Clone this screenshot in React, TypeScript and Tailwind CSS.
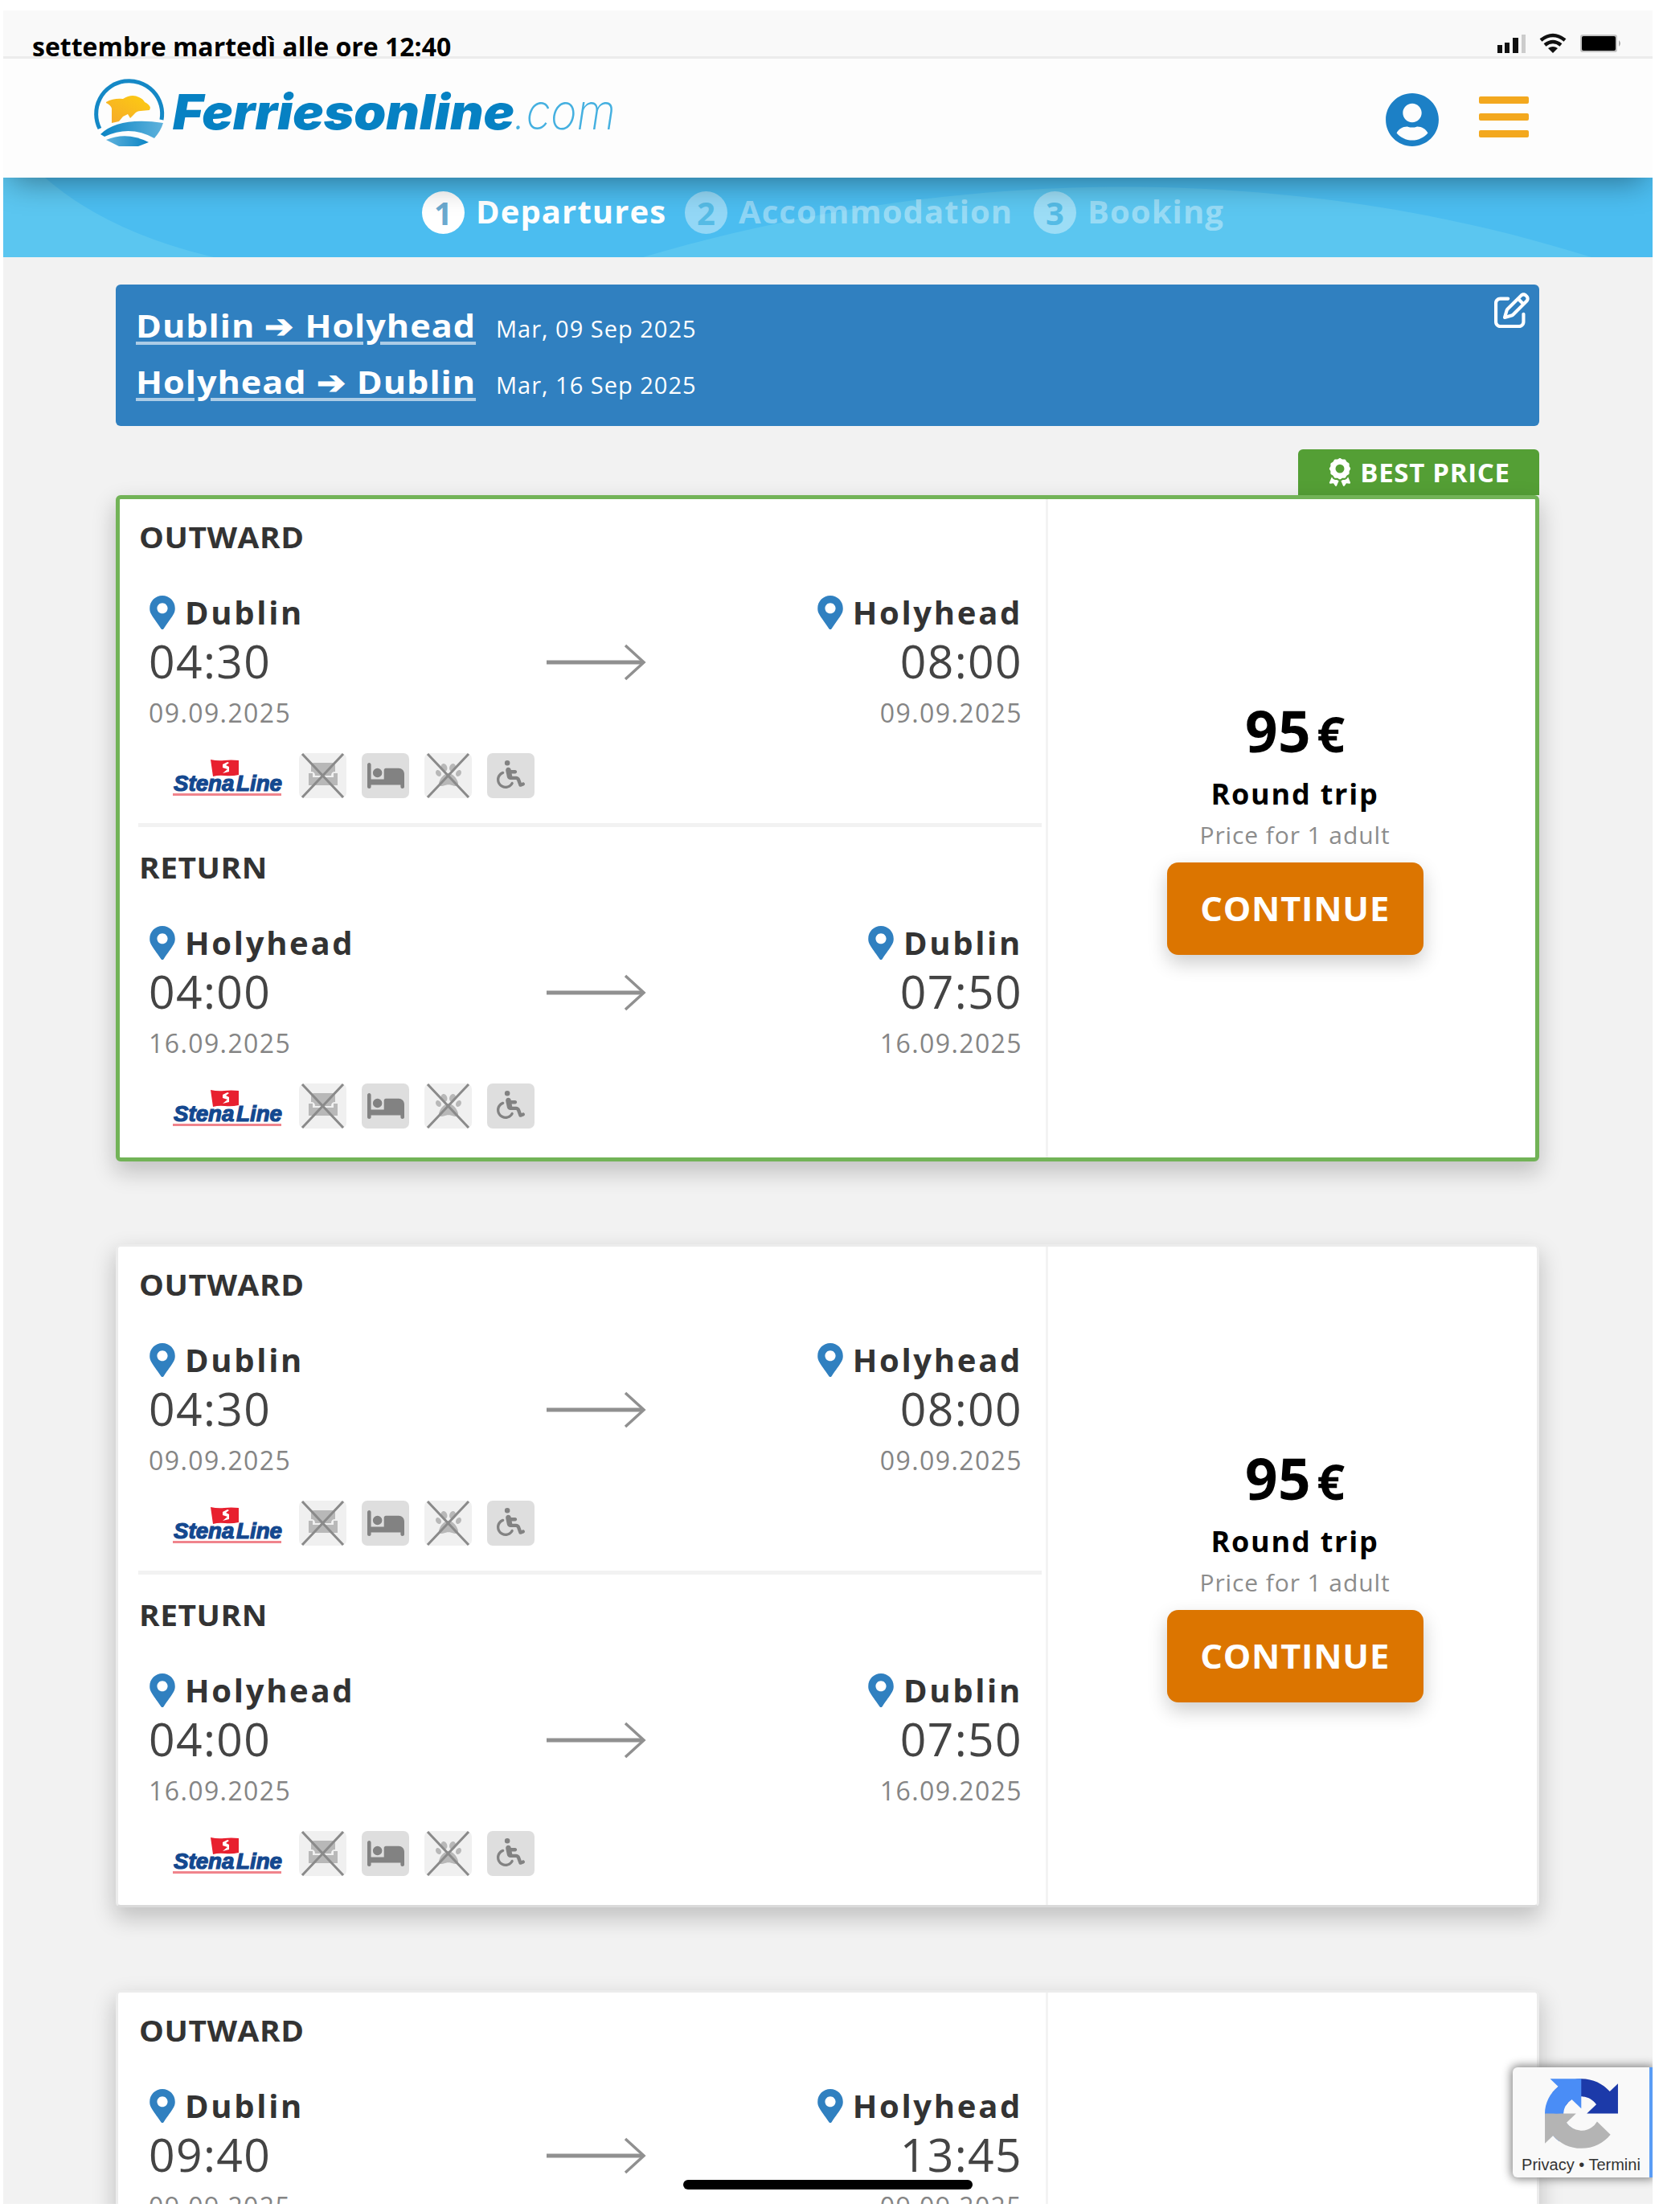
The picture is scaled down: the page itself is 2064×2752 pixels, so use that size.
import React from 'react';
import { FaAward, FaBed, FaPaw, FaRegPenToSquare, FaWheelchair } from 'react-icons/fa6';
import { FaMapMarkerAlt, FaUserCircle } from 'react-icons/fa';

interface Leg {
  title: string;
  from: string;
  to: string;
  departure: string;
  arrival: string;
  date: string;
}

interface Trip {
  id: number;
  best: boolean;
  price: number;
  legs: Leg[];
}

const outward: Leg = {
  title: 'OUTWARD',
  from: 'Dublin',
  to: 'Holyhead',
  departure: '04:30',
  arrival: '08:00',
  date: '09.09.2025'
};

const back: Leg = {
  title: 'RETURN',
  from: 'Holyhead',
  to: 'Dublin',
  departure: '04:00',
  arrival: '07:50',
  date: '16.09.2025'
};

const trips: Trip[] = [
  { id: 1, best: true, price: 95, legs: [outward, back] },
  { id: 2, best: false, price: 95, legs: [outward, back] },
  { id: 3, best: false, price: 95, legs: [{ ...outward, departure: '09:40', arrival: '13:45' }, back] }
];

const StatusBar = () => (
  <div className="relative z-20 flex h-[57px] items-end justify-between bg-[#f9f9f9] pl-[36px] pr-[36px]">
    <span className="-mb-[5px] whitespace-nowrap text-[32px] font-bold leading-[34px] text-black">
      settembre martedì alle ore 12:40
    </span>
    <svg className="mb-[2px] h-[28px] w-[158px]" viewBox="0 0 158 28">
      <path d="M1 16h6v10H1zM10 13h6v13h-6zM20 7h7v19h-7z" fill="#111" />
      <path d="M31 3h5v23h-5z" fill="#ccc" />
      <g fill="none" stroke="#111" strokeWidth="4.5">
        <path d="M55 10q15-12 30 0" />
        <path d="M60 16q10-8 20 0" />
      </g>
      <path d="M64 20q6-4 12 0l-6 6z" fill="#111" />
      <rect x="104" y="3" width="46" height="22" rx="3" fill="#c4c4c4" />
      <rect x="106" y="5" width="42" height="18" rx="2" fill="#000" />
      <path d="M152 10q4 4 0 8z" fill="#aaa" />
    </svg>
  </div>
);

const Logo = () => (
  <svg className="h-[90px] w-[660px]" viewBox="0 0 660 90">
    <defs>
      <linearGradient id="sea" x1="0" x2="1">
        <stop offset="0" stopColor="#0a84c4" />
        <stop offset="1" stopColor="#5fb2dc" />
      </linearGradient>
      <linearGradient id="foam" x1="1" x2="0">
        <stop offset="0" stopColor="#0a84c4" />
        <stop offset="1" stopColor="#5fb2dc" />
      </linearGradient>
      <linearGradient id="sun" x1="0" x2="1" y1="1" y2="0">
        <stop offset="0" stopColor="#f5a92b" />
        <stop offset="1" stopColor="#fdcd10" />
      </linearGradient>
    </defs>
    <path d="M8 63A41 41 0 1 1 85 52" fill="none" stroke="#1488c6" strokeWidth="5" />
    <path d="M16 30Q25 25 37 26Q48 19 57 24Q62 26 64 30Q70 33 71 37L70 40L59 41Q54 41 51 45L46 50L43 45L37 48L32 54L23 56V38Q22 34 16 31z" fill="url(#sun)" />
    <path d="M9 70Q32 48 87 56Q84 66 76 75Q46 58 14 73z" fill="url(#sea)" />
    <path d="M16 77Q42 66 69 80L56 85H32z" fill="url(#foam)" />
    <text x="99" y="64" fontFamily="Inter" fontSize="60" fontWeight="900" fontStyle="italic" fill="#0681c3" textLength="425" lengthAdjust="spacingAndGlyphs">Ferriesonline</text>
    <text x="523" y="64" fontFamily="Inter" fontSize="62" fontWeight="200" fontStyle="italic" fill="#45b0e0" textLength="127" lengthAdjust="spacingAndGlyphs">.com</text>
  </svg>
);

const Header = () => (
  <header className="relative z-10 flex h-[151px] items-start justify-between border-t-[3px] border-[#ececec] bg-[#fdfdfd] pl-[112px] pr-[154px] shadow-[0_14px_36px_-10px_rgba(0,0,0,0.42)]">
    <div className="mt-[24px]">
      <Logo />
    </div>
    <div className="mt-[42px] flex items-start gap-[49px]">
      <FaUserCircle className="h-[68px] w-[68px] text-[#1c80c6]" />
      <div className="mt-[5px] flex flex-col gap-[12px]">
        <span className="h-[9px] w-[62px] rounded-[2px] bg-[#f3a81e]" />
        <span className="h-[9px] w-[62px] rounded-[2px] bg-[#f3a81e]" />
        <span className="h-[9px] w-[62px] rounded-[2px] bg-[#f3a81e]" />
      </div>
    </div>
  </header>
);

const steps = [
  { n: 1, label: 'Departures', width: 'w-[274px]' },
  { n: 2, label: 'Accommodation', width: 'w-[381px]' },
  { n: 3, label: 'Booking', width: 'w-[210px]' }
];

const Steps = () => (
  <div className="relative h-[99px] overflow-hidden bg-[#4bbdf0]">
    <svg className="absolute inset-0 h-full w-full" viewBox="0 0 2052 99" preserveAspectRatio="none">
      <path d="M0 0H52Q130 68 262 99H0zM796 99C1180 -15 1600 -20 1976 99z" fill="#5bc6f0" />
    </svg>
    <div className="relative flex items-center pl-[521px] pt-[17px]">
      {steps.map(s => (
        <div key={s.n} className={`flex items-center ${s.n === 1 ? 'text-white' : 'text-white/40'}`}>
          <span className={`flex h-[53px] w-[53px] items-center justify-center rounded-full text-[40px] font-bold leading-none ${s.n === 1 ? 'bg-white text-[#6ba9cf]' : 'bg-white/40 text-[#55bbe5]'}`}>
            {s.n}
          </span>
          <span className={`-mt-[4px] pl-[14px] text-[40px] font-bold leading-[53px] tracking-[1.1px] ${s.width}`}>{s.label}</span>
        </div>
      ))}
    </div>
  </div>
);

const SearchSummary = () => (
  <div className="relative h-[176px] w-[1771px] rounded-[6px] bg-[#3080c0] pl-[25px] pt-[18px] text-white">
    {[
      ['Dublin ➔ Holyhead', 'Mar, 09 Sep 2025'],
      ['Holyhead ➔ Dublin', 'Mar, 16 Sep 2025']
    ].map(([route, date]) => (
      <div key={date} className="flex h-[70px] items-baseline leading-[66px]">
        <span className="w-[423px] origin-left scale-x-[1.08] whitespace-nowrap text-[40px] font-bold tracking-[0.9px] underline decoration-white/60 decoration-[4px] underline-offset-[5px]">{route}</span>
        <span className="ml-[25px] whitespace-nowrap text-[29px] font-medium tracking-[1px]">{date}</span>
      </div>
    ))}
    <FaRegPenToSquare className="absolute right-[12px] top-[10px] h-[44px] w-[44px]" />
  </div>
);

const StenaLine = () => (
  <svg className="h-[56px] w-[138px]" viewBox="0 0 138 56">
    <path d="M47 8q9 2 17 1t18 0v18q-9 2-17 1t-15 1z" fill="#e8202f" />
    <path d="M68 11l-6 3v4l6 2-6 5 8-2v-6l-4-2 4-3z" fill="#fff" />
    <text x="1" y="47" fontFamily="Liberation Sans" fontSize="27" fontWeight="700" fontStyle="italic" fill="#14488f" stroke="#14488f" strokeWidth="1.2" wordSpacing="-5" textLength="135" lengthAdjust="spacingAndGlyphs">Stena Line</text>
    <path d="M0 50h135v3H0z" fill="#f0848c" />
  </svg>
);

const Lounge = ({ className }: { className: string }) => (
  <svg className={className} viewBox="0 0 38 30" fill="currentColor">
    <path d="M4 12V5q0-4 4-4h22q4 0 4 4v7q-5 0-5 5H9q0-5-5-5z" />
    <path d="M1 14h5v5h26v-5h5v15H1z" />
  </svg>
);

const features = [
  { key: 'lounge', icon: Lounge, available: false, size: 'h-[30px] w-[38px] -mt-[4px]' },
  { key: 'cabin', icon: FaBed, available: true, size: 'h-[46px] w-[46px]' },
  { key: 'pets', icon: FaPaw, available: false, size: 'h-[32px] w-[34px] -mt-[3px]' },
  { key: 'wheelchair', icon: FaWheelchair, available: true, size: 'h-[35px] w-[37px] -mt-[3px]' }
];

const Features = () => (
  <div className="flex gap-[19px]">
    {features.map(({ key, icon: Icon, available, size }) => (
      <div key={key} className={`relative flex h-[56px] w-[59px] items-center justify-center rounded-[7px] ${available ? 'bg-[#dedede] text-[#828282]' : 'bg-[#f0f0f0] text-[#b8b8b8]'}`}>
        <Icon className={size} />
        {!available && (
          <svg className="absolute inset-0 h-full w-full" viewBox="0 0 59 56">
            <path d="M4 1l51 54M55 1L4 55" stroke="#8a8a8a" strokeWidth="3" />
          </svg>
        )}
      </div>
    ))}
  </div>
);

const City = ({ name }: { name: string }) => (
  <div className="flex h-[48px] items-center">
    <FaMapMarkerAlt className="h-[42px] w-[34px] text-[#3080c0]" />
    <span className="ml-[11px] text-[40px] font-bold leading-[48px] tracking-[2.7px] text-[#333]">{name}</span>
  </div>
);

const LegView = ({ leg, last }: { leg: Leg; last: boolean }) => (
  <div className="relative h-[411px] pt-[28px]">
    <h3 className="ml-[24px] w-fit origin-left scale-x-[1.08] text-[36px] font-bold leading-[40px] tracking-[0.5px] text-[#333]">{leg.title}</h3>
    <div className="mt-[49px] flex justify-between pl-[36px] pr-[29px]">
      <div>
        <City name={leg.from} />
        <p className="mt-[6px] text-[57px] leading-[60px] tracking-[1.4px] text-[#444]">{leg.departure}</p>
        <p className="mt-[15px] text-[32px] leading-[40px] tracking-[1.4px] text-[#858585]">{leg.date}</p>
      </div>
      <svg className="absolute left-[531px] top-[179px] h-[48px] w-[124px]" viewBox="0 0 124 48" fill="none" stroke="#909090">
        <path d="M0 24h120" strokeWidth="5" />
        <path d="M98 3l23 21-23 21" strokeWidth="3.5" />
      </svg>
      <div className="flex flex-col items-end">
        <City name={leg.to} />
        <p className="mt-[6px] text-[57px] leading-[60px] tracking-[1.4px] text-[#444]">{leg.arrival}</p>
        <p className="mt-[15px] text-[32px] leading-[40px] tracking-[1.4px] text-[#858585]">{leg.date}</p>
      </div>
    </div>
    <div className="mt-[30px] flex pl-[66px]">
      <StenaLine />
      <div className="ml-[19px]">
        <Features />
      </div>
    </div>
    {!last && <div className="ml-[23px] mr-[5px] mt-[31px] h-[5px] bg-[#f2f2f2]" />}
  </div>
);

const TripCard = ({ trip }: { trip: Trip }) => (
  <div
    className={`flex w-[1771px] rounded-[6px] bg-white shadow-[0_12px_28px_2px_rgba(0,0,0,0.2)] ${
      trip.best ? 'h-[829px] border-[5px] border-[#72b357]' : 'h-[825px] border-[3px] border-[#ececec] border-b-[#dadada] px-[2px]'
    }`}
  >
    <div className="w-[1155px] border-r-[3px] border-[#f3f3f3]">
      {trip.legs.map((leg, i) => (
        <LegView key={leg.title} leg={leg} last={i === 1} />
      ))}
    </div>
    <div className="flex flex-1 flex-col items-center pl-[8px] pt-[240px]">
      <div className="flex items-baseline gap-[7px] font-bold leading-[96px] text-black">
        <span className="text-[71px] tracking-[0.5px]">{trip.price}</span>
        <span className="text-[61px]">€</span>
      </div>
      <p className="mt-[3px] text-[36px] font-bold leading-[48px] tracking-[1.8px] text-black">Round trip</p>
      <p className="mt-[4px] text-[30px] leading-[46px] tracking-[0.9px] text-[#8c8c8c]">Price for 1 adult</p>
      <button className="mt-[11px] h-[115px] w-[319px] rounded-[14px] bg-[#dc7500] text-[41px] font-bold text-white shadow-[0_10px_24px_rgba(0,0,0,0.2)]">
        <span className="inline-block scale-x-[1.06] tracking-[0.7px]">CONTINUE</span>
      </button>
    </div>
  </div>
);

const BestPrice = () => (
  <div className="ml-auto flex h-[57px] w-[300px] items-center justify-center gap-[9px] rounded-t-[6px] bg-[#549f35] text-[33px] font-bold text-white">
    <FaAward className="h-[35px] w-[32px]" />
    <span className="whitespace-nowrap tracking-[0.7px]">BEST PRICE</span>
  </div>
);

const Recaptcha = () => (
  <div className="absolute bottom-[33px] right-0 flex h-[137px] w-[174px] flex-col items-center rounded-l-[6px] border-r-[4px] border-[#5a9cf5] bg-[#f9f9f9] pt-[14px] shadow-[0_0_12px_2px_#808080]">
    <svg className="h-[87px] w-[91px]" viewBox="0 0 64 64" preserveAspectRatio="none">
      <path d="M64 31.955l-.033-1.37V4.687l-7.16 7.16C50.948 4.674 42.033.093 32.05.093c-10.4 0-19.622 4.96-25.458 12.64l11.736 11.86a15.55 15.55 0 0 1 4.754-5.334c2.05-1.6 4.952-2.906 8.968-2.906.485 0 .86.057 1.135.163 4.976.393 9.288 3.14 11.828 7.124l-8.307 8.307L64 31.953" fill="#1c3aa9" />
      <path d="M31.862.094l-1.37.033H4.594l7.16 7.16C4.58 13.147 0 22.06 0 32.046c0 10.4 4.96 19.622 12.64 25.458L24.5 45.768a15.55 15.55 0 0 1-5.334-4.754c-1.6-2.05-2.906-4.952-2.906-8.968 0-.485.057-.86.163-1.135.393-4.976 3.14-9.288 7.124-11.828l8.307 8.307L31.86.095" fill="#4a8df6" />
      <path d="M.001 32.045l.033 1.37v25.898l7.16-7.16c5.86 7.173 14.774 11.754 24.76 11.754 10.4 0 19.622-4.96 25.458-12.64l-11.736-11.86a15.55 15.55 0 0 1-4.754 5.334c-2.05 1.6-4.952 2.906-8.968 2.906-.485 0-.86-.057-1.135-.163-4.976-.393-9.288-3.14-11.828-7.124l8.307-8.307c-10.522.04-22.4.066-27.295-.005" fill="#b4b4b4" />
    </svg>
    <p className="mt-[8px] whitespace-nowrap font-['Liberation_Sans'] text-[20px] leading-[24px] text-[#333]">Privacy • Termini</p>
  </div>
);

export default function App() {
  return (
    <div className="h-[2752px] w-[2064px] overflow-hidden bg-white pb-[10px] pl-[4px] pr-[8px] pt-[13px] font-['Open_Sans',sans-serif]">
      <div className="relative h-[2729px] overflow-hidden bg-[#f2f2f2]">
        <StatusBar />
        <Header />
        <Steps />
        <main className="ml-[140px] w-[1771px] pt-[34px]">
          <SearchSummary />
          <div className="mt-[29px] flex flex-col">
            <BestPrice />
            <div className="flex flex-col gap-[103px]">
              {trips.map(trip => (
                <TripCard key={trip.id} trip={trip} />
              ))}
            </div>
          </div>
        </main>
        <Recaptcha />
        <div className="absolute bottom-[18px] left-[846px] h-[12px] w-[360px] rounded-[6px] bg-black" />
      </div>
    </div>
  );
}
